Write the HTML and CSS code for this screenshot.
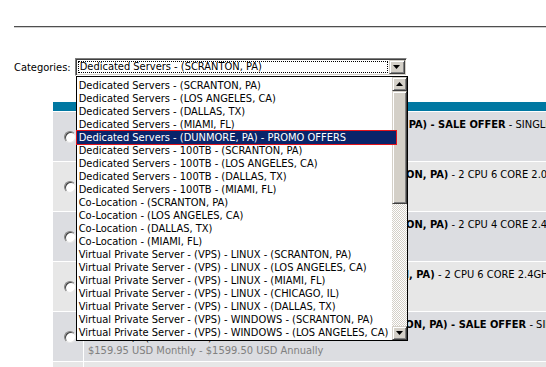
FILE: index.html
```html
<!DOCTYPE html>
<html lang="en">
<head>
    <meta charset="UTF-8">
    <title>Order Server</title>
    <link rel="stylesheet" href="styles.css">
</head>
<body>
    <div class="page">
        <hr class="rule">

        <!-- category picker, shown with its list open -->
        <div class="filter">
            <label class="filter-label">Categories:</label>
            <div class="combo">
                <div class="combo-field"><span class="combo-text">Dedicated Servers - (SCRANTON, PA)</span></div>
                <div class="combo-btn">
                    <svg width="7" height="4" viewBox="0 0 7 4"><path d="M0 0h7L3.5 4z" fill="#000"/></svg>
                </div>

                <div class="combo-list">
                    <ul class="options">
                        <li>Dedicated Servers - (SCRANTON, PA)</li>
                        <li>Dedicated Servers - (LOS ANGELES, CA)</li>
                        <li>Dedicated Servers - (DALLAS, TX)</li>
                        <li>Dedicated Servers - (MIAMI, FL)</li>
                        <li class="selected">Dedicated Servers - (DUNMORE, PA) - PROMO OFFERS</li>
                        <li>Dedicated Servers - 100TB - (SCRANTON, PA)</li>
                        <li>Dedicated Servers - 100TB - (LOS ANGELES, CA)</li>
                        <li>Dedicated Servers - 100TB - (DALLAS, TX)</li>
                        <li>Dedicated Servers - 100TB - (MIAMI, FL)</li>
                        <li>Co-Location - (SCRANTON, PA)</li>
                        <li>Co-Location - (LOS ANGELES, CA)</li>
                        <li>Co-Location - (DALLAS, TX)</li>
                        <li>Co-Location - (MIAMI, FL)</li>
                        <li>Virtual Private Server - (VPS) - LINUX - (SCRANTON, PA)</li>
                        <li>Virtual Private Server - (VPS) - LINUX - (LOS ANGELES, CA)</li>
                        <li>Virtual Private Server - (VPS) - LINUX - (MIAMI, FL)</li>
                        <li>Virtual Private Server - (VPS) - LINUX - (CHICAGO, IL)</li>
                        <li>Virtual Private Server - (VPS) - LINUX - (DALLAS, TX)</li>
                        <li>Virtual Private Server - (VPS) - WINDOWS - (SCRANTON, PA)</li>
                        <li>Virtual Private Server - (VPS) - WINDOWS - (LOS ANGELES, CA)</li>
                    </ul>
                    <div class="scrollbar">
                        <div class="sb-btn"><svg width="7" height="4" viewBox="0 0 7 4"><path d="M3.5 0L7 4H0z" fill="#000"/></svg></div>
                        <div class="sb-thumb"></div>
                        <div class="sb-track"></div>
                        <div class="sb-btn"><svg width="7" height="4" viewBox="0 0 7 4"><path d="M0 0h7L3.5 4z" fill="#000"/></svg></div>
                    </div>
                </div>
            </div>
        </div>

        <!-- plans table -->
        <div class="plans">
            <div class="plans-head"></div>

            <div class="plan">
                <div class="plan-pick"><span class="radio"></span></div>
                <div class="plan-info">
                    <div><b>Dell PowerEdge 860 - Intel Xeon X3220 1U - (SCRANTON, PA) - SALE OFFER</b> - SINGLE CPU QUAD CORE 2.4GHZ</div>
                    <div>4GB DDR2 RAM - 250GB SATA</div>
                    <div class="price">$99.95 USD Monthly</div>
                </div>
            </div>

            <div class="plan">
                <div class="plan-pick"><span class="radio"></span></div>
                <div class="plan-info">
                    <div><b>Dell PowerEdge R610 - Intel Xeon E5645 24GB - (SCRANTON, PA)</b> - 2 CPU 6 CORE 2.0GHZ</div>
                    <div>24GB DDR3 RAM - 2 x 1TB SATA</div>
                    <div class="price">$349.95 USD Monthly</div>
                </div>
            </div>

            <div class="plan">
                <div class="plan-pick"><span class="radio"></span></div>
                <div class="plan-info">
                    <div><b>Dell PowerEdge R710 - Intel Xeon E5530 12GB - (SCRANTON, PA)</b> - 2 CPU 4 CORE 2.40GHZ</div>
                    <div>12GB DDR3 RAM - 2 x 500GB SATA</div>
                    <div class="price">$279.95 USD Monthly</div>
                </div>
            </div>

            <div class="plan">
                <div class="plan-pick"><span class="radio"></span></div>
                <div class="plan-info">
                    <div><b>Dell PowerEdge R710 - Intel Xeon X5660 2U - (SCRANTON, PA)</b> - 2 CPU 6 CORE 2.4GHZ</div>
                    <div>48GB DDR3 RAM - 4 x 1TB SATA</div>
                    <div class="price">$499.95 USD Monthly</div>
                </div>
            </div>

            <div class="plan">
                <div class="plan-pick"><span class="radio"></span></div>
                <div class="plan-info">
                    <div><b>Dell PowerEdge 2950 - Intel Xeon E5420 16GB - (SCRANTON, PA) - SALE OFFER</b> - SINGLE CPU QUAD CORE</div>
                    <div>FSB 3 GT/S (8MB CACHE) WITH</div>
                    <div class="price">$159.95 USD Monthly - $1599.50 USD Annually</div>
                </div>
            </div>

            <div class="plan">
                <div class="plan-pick"><span class="radio"></span></div>
                <div class="plan-info">
                    <div><b>Dell PowerEdge R410 - (SCRANTON, PA)</b> - 2 CPU 4 CORE 2.26GHZ</div>
                    <div>8GB DDR3 RAM - 500GB SATA</div>
                    <div class="price">$229.95 USD Monthly</div>
                </div>
            </div>
        </div>
    </div>
</body>
</html>
```

FILE: styles.css
```css
body {
    margin: 0;
    background: #fff;
    color: #000;
    font-family: "DejaVu Sans Condensed", "DejaVu Sans", sans-serif;
    font-size: 11px;
    overflow: hidden;
}
.page {
    padding: 26px 0 0 14px;
}
.rule {
    margin: 0;
    height: 0;
    border: 0;
    border-top: 1px solid #4f4f4f;
    border-bottom: 1px solid #cfcfcf;
}

/* Category picker */
.filter {
    display: flex;
    align-items: center;
    gap: 4px;
    margin-top: 30px;
    position: relative;
    z-index: 2;
}
.combo {
    position: relative;
    display: flex;
    width: 332px;
    height: 18px;
    box-sizing: border-box;
    border: 1px solid;
    border-color: #808080 #fff #fff #808080;
    box-shadow: inset 1px 1px 0 #404040, inset -1px -1px 0 #d4d0c8;
    background: #fff;
    padding: 2px;
}
.combo-field {
    flex: 1;
    display: flex;
    margin-right: 1px;
}
.combo-text {
    flex: 1;
    border: 1px dotted #000;
    line-height: 10px;
    padding: 0 1px;
}
.combo-btn,
.sb-btn {
    display: flex;
    align-items: center;
    justify-content: center;
    box-sizing: border-box;
    background: #d4d0c8;
    border: 1px solid;
    border-color: #d4d0c8 #404040 #404040 #d4d0c8;
    box-shadow: inset 1px 1px 0 #fff, inset -1px -1px 0 #808080;
}
.combo-btn {
    width: 16px;
    margin: -1px -1px -1px 0;
}
.combo-list {
    position: absolute;
    left: 0;
    top: 17px;
    width: 332px;
    height: 265px;
    box-sizing: border-box;
    display: flex;
    background: #fff;
    border: 1px solid #000;
}
.options {
    flex: 1;
    margin: 0;
    padding: 2px 0 0;
    list-style: none;
}
.options li {
    height: 13px;
    line-height: 13px;
    padding-left: 2px;
    white-space: nowrap;
}
.options .selected {
    position: relative;
    z-index: 1;
    margin-right: -4px;
    background: #0a246a;
    color: #fff;
    outline: 1px solid #e3141b;
}
.scrollbar {
    width: 15px;
    display: flex;
    flex-direction: column;
}
.sb-btn {
    height: 14px;
}
.sb-thumb {
    height: 113px;
    box-sizing: border-box;
    background: #d4d0c8;
    border: 1px solid;
    border-color: #d4d0c8 #404040 #404040 #d4d0c8;
    box-shadow: inset 1px 1px 0 #fff, inset -1px -1px 0 #808080;
}
.sb-track {
    flex: 1;
    background: repeating-conic-gradient(#fff 0 25%, #d4d0c8 0 50%) 0 0 / 2px 2px;
}

/* Plans table */
.plans {
    margin: 26px 0 0 39px;
    width: 640px;
}
.plans-head {
    height: 9px;
    background: #0078a2;
}
.plan {
    display: grid;
    grid-template-columns: 31px 1fr;
    border-top: 1px solid #fff;
    background: #dcdde1;
}
.plan:nth-child(odd) {
    background: #e7e7e7;
}
.plan-pick {
    display: flex;
    align-items: center;
    justify-content: center;
    border-right: 1px solid #fff;
}
.radio {
    width: 12px;
    height: 12px;
    box-sizing: border-box;
    border-radius: 50%;
    background: #fff;
    border: 1px solid;
    border-color: #808080 #e8e8e8 #e8e8e8 #808080;
    box-shadow: inset 1px 1px 0 #404040;
    margin-left: 3px;
}
.plan-info {
    padding: 6px 0 4px 4px;
    line-height: 13px;
    white-space: nowrap;
    overflow: hidden;
}
.price {
    color: #808080;
}
```
